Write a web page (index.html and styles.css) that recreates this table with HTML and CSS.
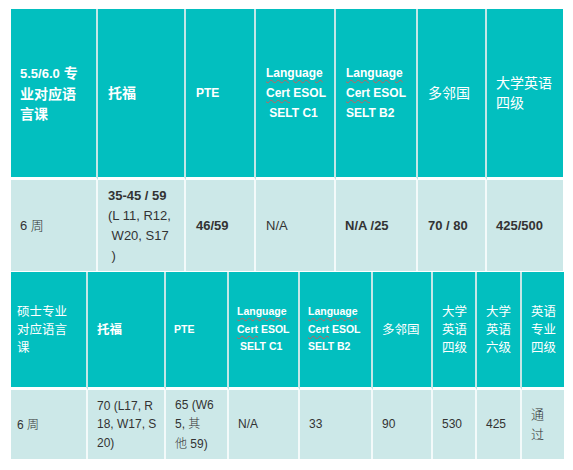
FILE: index.html
```html
<!DOCTYPE html>
<html lang="zh">
<head>
<meta charset="utf-8">
<title>语言课要求</title>
<link rel="stylesheet" href="styles.css">
</head>
<body>
<table class="grid grid-top">
  <colgroup>
    <col class="c87"><col class="c88"><col class="c70"><col class="c80"><col class="c82"><col class="c69"><col class="c76">
  </colgroup>
  <tr class="head">
    <th class="pl9 bold"><span class="lat">5.5/6.0</span> 专<br>业对应语<br>言课</th>
    <th class="bold">托福</th>
    <th class="lat">PTE</th>
    <th class="lat"><span class="sp">Language</span><br><span class="sp">Cert</span> ESOL<br>&nbsp;SELT C1</th>
    <th class="lat"><span class="sp">Language</span><br><span class="sp">Cert</span> ESOL<br>SELT B2</th>
    <th>多邻国</th>
    <th class="pl9">大学英语<br>四级</th>
  </tr>
  <tr class="body">
    <td class="pl9">6 <span class="serif">周</span></td>
    <td><b>35-45 / 59</b><br>(L 11, R12,<br>&nbsp;W20, S17<br>&nbsp;)</td>
    <td><b>46/59</b></td>
    <td>N/A</td>
    <td class="pl9"><b>N/A /25</b></td>
    <td><b>70 / 80</b></td>
    <td class="pl9"><b>425/500</b></td>
  </tr>
</table>
<table class="grid grid-bottom">
  <colgroup>
    <col class="c77"><col class="c78"><col class="c63"><col class="c71"><col class="c73"><col class="c60"><col class="c44"><col class="c45"><col class="c42">
  </colgroup>
  <tr class="head">
    <th class="pl6">硕士专业<br>对应语言<br>课</th>
    <th class="bold">托福</th>
    <th class="lat">PTE</th>
    <th class="lat"><span class="sp">Language</span><br><span class="sp">Cert</span> ESOL<br>&nbsp;SELT C1</th>
    <th class="lat"><span class="sp">Language</span><br><span class="sp">Cert</span> ESOL<br>SELT B2</th>
    <th>多邻国</th>
    <th>大学<br>英语<br>四级</th>
    <th>大学<br>英语<br>六级</th>
    <th>英语<br>专业<br>四级</th>
  </tr>
  <tr class="body">
    <td class="pl6">6 <span class="serif">周</span></td>
    <td>70 (L17, R<br>18, W17, S<br>20)</td>
    <td>65 (W6<br>5, <span class="serif">其</span><br><span class="serif">他</span> 59)</td>
    <td>N/A</td>
    <td>33</td>
    <td>90</td>
    <td>530</td>
    <td>425</td>
    <td><span class="serif big">通<br>过</span></td>
  </tr>
</table>
</body>
</html>
```
FILE: styles.css
```css
html, body {
  margin: 0;
  padding: 0;
  background: #ffffff;
}
body {
  padding: 9px 0 0 11px;
  font-family: "Liberation Sans", "Noto Sans CJK SC", sans-serif;
}
.grid {
  table-layout: fixed;
  border-collapse: separate;
  border-spacing: 0;
}
.grid-top { width: 552px; }
.grid-bottom { width: 553px; margin-top: 1px; }

.c87 { width: 87px; } .c88 { width: 88px; } .c70 { width: 70px; }
.c80 { width: 80px; } .c82 { width: 82px; } .c69 { width: 69px; }
.c76 { width: 76px; } .c77 { width: 77px; } .c78 { width: 78px; }
.c63 { width: 63px; } .c71 { width: 71px; } .c73 { width: 73px; }
.c60 { width: 60px; } .c44 { width: 44px; } .c45 { width: 45px; }
.c42 { width: 42px; }

.grid th, .grid td {
  box-sizing: border-box;
  text-align: left;
  vertical-align: middle;
  white-space: nowrap;
  padding: 0 0 0 10px;
  overflow: hidden;
}
.head th {
  background: #02bfbf;
  color: #ffffff;
  font-weight: normal;
  border-right: 2px solid #c3e7e7;
  border-bottom: 3px solid #ffffff;
}
.body td {
  background: #cce8e8;
  color: #333333;
  border-right: 2px solid #f3fafa;
}
.head th:last-child, .body td:last-child { border-right: none; }

/* top table */
.grid-top .head th {
  height: 171px;
  font-size: 14px;
  line-height: 20px;
}
.grid-top .head th .lat, .grid-top .head th.lat {
  font-weight: bold;
  font-size: 12px;
}
.grid-top .head th:first-child .lat { font-size: 13px; }
.grid-top .body td {
  height: 91px;
  font-size: 13px;
  line-height: 20px;
}

/* bottom table */
.grid-bottom .head th {
  height: 118px;
  font-size: 12.5px;
  line-height: 18px;
  padding-left: 9px;
}
.grid-bottom .head th.lat {
  font-weight: bold;
  font-size: 10.5px;
  line-height: 17.5px;
  padding-left: 8px;
}
.grid-bottom .body td {
  height: 69px;
  font-size: 12px;
  line-height: 18.5px;
  padding-left: 9px;
}

.head th.bold { font-weight: bold; }
.pl9 { padding-left: 9px !important; }
.pl6 { padding-left: 6px !important; }

.sp {
  text-decoration: underline wavy #c4605c;
  text-decoration-thickness: 1px;
  text-underline-offset: 2px;
}
.serif {
  font-family: "Noto Sans CJK SC", sans-serif;
  font-weight: 300;
}
.big { font-size: 13px; }
b { font-weight: bold; }
```
